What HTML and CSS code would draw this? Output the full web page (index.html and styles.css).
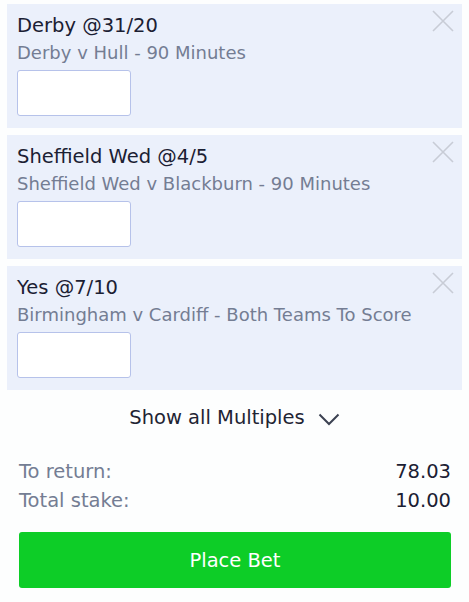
FILE: index.html
```html
<!DOCTYPE html>
<html lang="en">
<head>
    <meta charset="UTF-8">
    <meta name="viewport" content="width=device-width, initial-scale=1.0">
    <title>Bet Slip</title>
    <link rel="stylesheet" href="styles.css">
</head>
<body>

    <div class="slip-list">
        <div class="selection">
            <button class="remove" aria-label="Remove">
                <svg width="22" height="22" viewBox="0 0 22 22"><path d="M1 1L21 21M21 1L1 21" /></svg>
            </button>
            <div class="sel-title">Derby @31/20</div>
            <div class="sel-market">Derby v Hull - 90 Minutes</div>
            <input type="text" class="stake">
        </div>

        <div class="selection">
            <button class="remove" aria-label="Remove">
                <svg width="22" height="22" viewBox="0 0 22 22"><path d="M1 1L21 21M21 1L1 21" /></svg>
            </button>
            <div class="sel-title">Sheffield Wed @4/5</div>
            <div class="sel-market">Sheffield Wed v Blackburn - 90 Minutes</div>
            <input type="text" class="stake">
        </div>

        <div class="selection">
            <button class="remove" aria-label="Remove">
                <svg width="22" height="22" viewBox="0 0 22 22"><path d="M1 1L21 21M21 1L1 21" /></svg>
            </button>
            <div class="sel-title">Yes @7/10</div>
            <div class="sel-market">Birmingham v Cardiff - Both Teams To Score</div>
            <input type="text" class="stake">
        </div>
    </div>

    <div class="multiples">
        <span>Show all Multiples</span>
        <svg class="chevron" width="22" height="13" viewBox="0 0 22 13"><path d="M1.5 1.5L11 11L20.5 1.5" /></svg>
    </div>

    <div class="summary">
        <div class="row"><span class="label">To return:</span><span class="value">78.03</span></div>
        <div class="row"><span class="label">Total stake:</span><span class="value">10.00</span></div>
        <button class="place-btn">Place Bet</button>
    </div>

</body>
</html>
```

FILE: styles.css
```css
* { margin: 0; padding: 0; box-sizing: border-box; font-family: 'DejaVu Sans', Verdana, sans-serif; }
body { background: #fdfefe; color: #1b2033; width: 469px; }

.slip-list { padding: 4px 7px 0; display: flex; flex-direction: column; gap: 7px; }
.selection {
    position: relative; background: #ebf0fb;
    padding: 9px 10px 12px; height: 124px;
}
.sel-title { font-size: 19.5px; line-height: 26px; color: #1b2033; }
.sel-market { font-size: 18px; line-height: 27px; color: #747d93; white-space: nowrap; }
.stake {
    display: block; margin-top: 4px; width: 114px; height: 46px;
    background: #fff; border: 1.5px solid #b6c2ea; border-radius: 3px; outline: none;
}
.remove {
    position: absolute; top: 6px; right: 8px;
    background: none; border: none; width: 22px; height: 22px; cursor: pointer;
}
.remove svg { display: block; }
.remove path { stroke: #c8ccd6; stroke-width: 1.6; fill: none; }

.multiples {
    display: flex; justify-content: center; align-items: center; gap: 13px;
    margin-top: 16px; font-size: 19.5px; line-height: 24px; color: #1f2433;
}
.chevron { margin-top: 2px; }
.chevron path { stroke: #3c4252; stroke-width: 2; fill: none; }

.summary { padding: 27px 18px 0 19px; }
.row { display: flex; justify-content: space-between; font-size: 19.5px; line-height: 29px; }
.label { color: #747d93; }
.value { color: #1b2033; }

.place-btn {
    display: block; width: 100%; height: 56px; margin-top: 17px;
    background: #0dcd27; color: #fff; border: none; border-radius: 3px;
    font-size: 19.5px; cursor: pointer;
}
```
